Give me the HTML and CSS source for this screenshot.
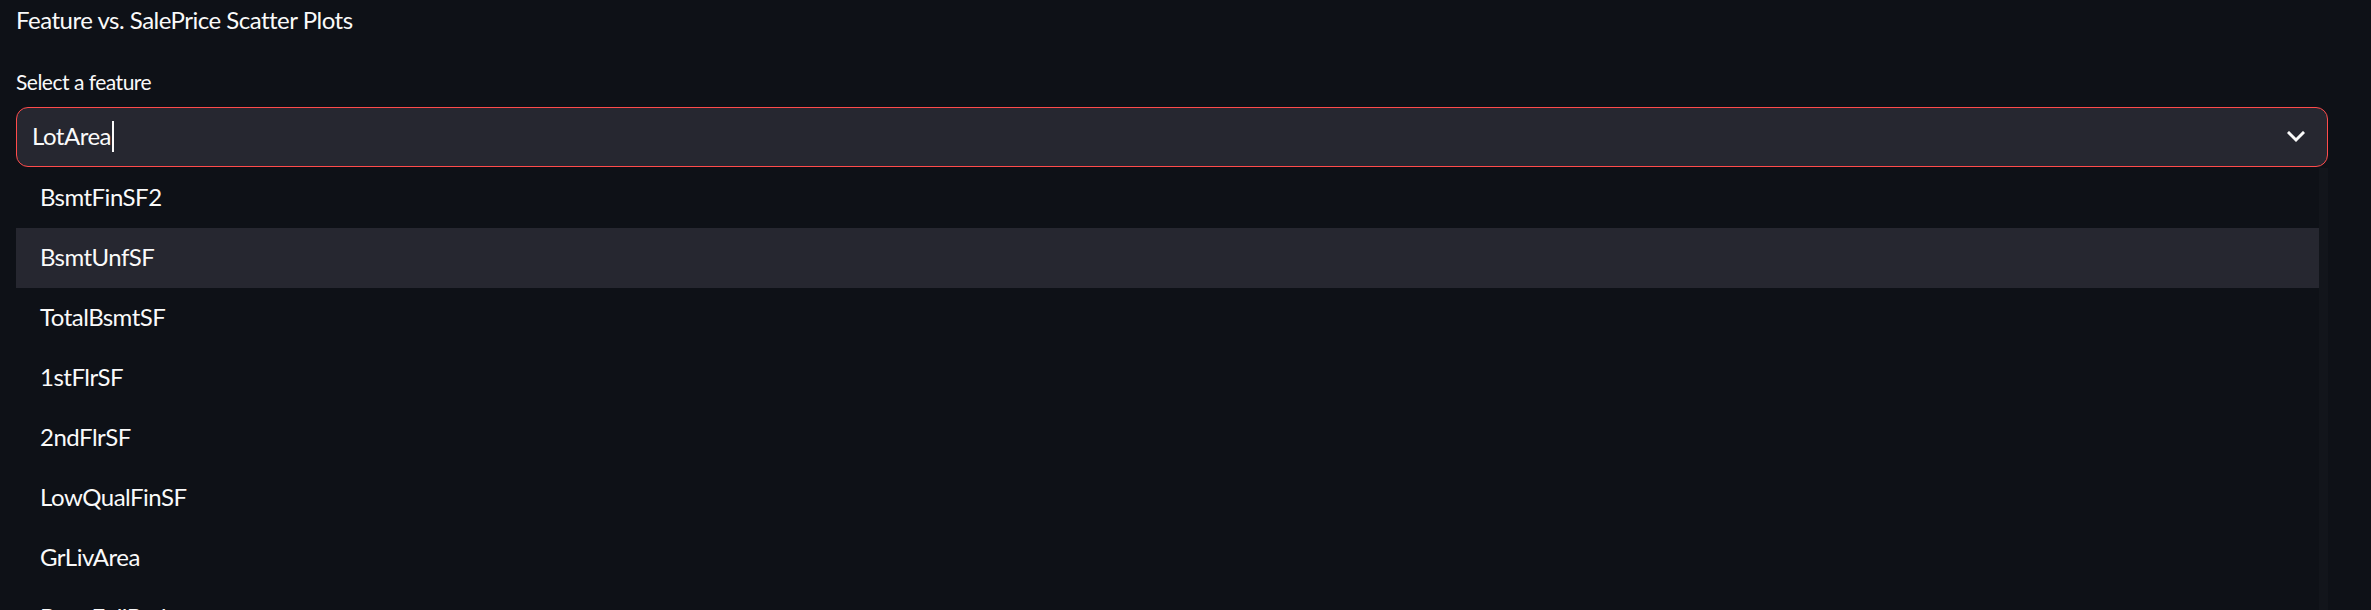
FILE: index.html
```html
<!DOCTYPE html>
<html lang="en">
<head>
<meta charset="utf-8">
<title>Feature vs. SalePrice Scatter Plots</title>
<link rel="stylesheet" href="styles.css">
</head>
<body>
<main class="page">
  <h2 class="title">Feature vs. SalePrice Scatter Plots</h2>
  <label class="label" for="feature">Select a feature</label>
  <div class="select" id="feature">
    <span class="value">LotArea</span><span class="caret"></span>
    <svg class="chevron" width="18" height="12" viewBox="0 0 18 12" aria-hidden="true">
      <polyline points="2,2 9,9 16,2" fill="none" stroke="#fafafa" stroke-width="3" stroke-linecap="square"/>
    </svg>
  </div>
  <div class="menu">
    <ul class="options">
      <li class="option">BsmtFinSF2</li>
      <li class="option active">BsmtUnfSF</li>
      <li class="option">TotalBsmtSF</li>
      <li class="option">1stFlrSF</li>
      <li class="option">2ndFlrSF</li>
      <li class="option">LowQualFinSF</li>
      <li class="option">GrLivArea</li>
      <li class="option">BsmtFullBath</li>
    </ul>
    <div class="scrollbar"></div>
  </div>
</main>
</body>
</html>
```
FILE: styles.css
```css
* { box-sizing: border-box; }
html, body {
  margin: 0;
  padding: 0;
  height: 100%;
  background: #0e1117;
  overflow: hidden;
}
.page {
  display: flex;
  flex-direction: column;
  padding: 2px 43px 0 16px;
  font-family: "Lato", "Liberation Sans", sans-serif;
  color: #fafafa;
  letter-spacing: -0.5px;
}
.title {
  margin: 0;
  font-size: 24px;
  font-weight: 400;
  line-height: 36px;
  height: 36px;
}
.label {
  margin-top: 28px;
  font-size: 21px;
  line-height: 31px;
  height: 31px;
}
.select {
  margin-top: 10px;
  height: 60px;
  display: flex;
  align-items: center;
  padding: 0 22px 2px 15px;
  background: #262730;
  border: 1.5px solid #ff4b4b;
  border-radius: 12px;
  font-size: 24px;
}
.value { line-height: 1; }
.caret {
  width: 2px;
  height: 31px;
  background: #fafafa;
  margin-left: 1px;
}
.chevron { margin-left: auto; margin-top: 2px; }
.menu {
  margin-top: 1px;
  display: flex;
}
.options {
  list-style: none;
  margin: 0;
  padding: 0;
  flex: 1;
}
.option {
  height: 60px;
  display: flex;
  align-items: center;
  padding: 0 0 3px 24px;
  font-size: 24px;
}
.option.active { background: #262730; }
.scrollbar {
  width: 9px;
  background: #12151b;
}
```
